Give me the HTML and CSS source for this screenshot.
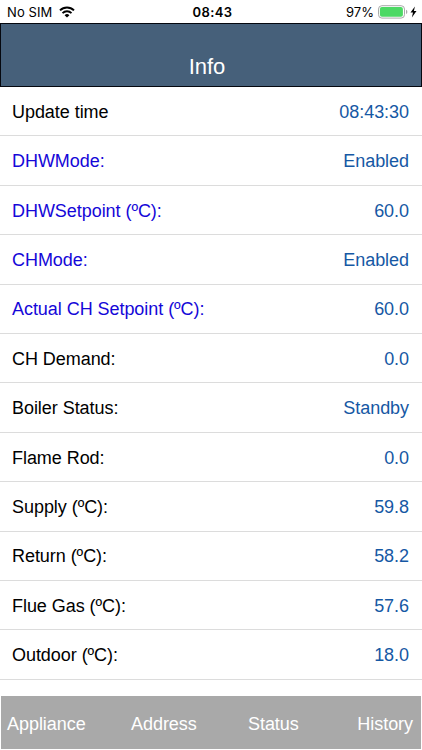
FILE: index.html
```html
<!DOCTYPE html>
<html lang="en">
<head>
    <meta charset="UTF-8">
    <meta name="viewport" content="width=device-width, initial-scale=1.0">
    <title>Info</title>
    <link rel="stylesheet" href="styles.css">
</head>
<body>

    <div class="status-bar">
        <div class="carrier">
            <span>No SIM</span>
            <svg class="wifi" width="16" height="12" viewBox="0 0 16 12">
                <path d="M1 4.4 A10 10 0 0 1 15 4.4" fill="none" stroke="#000" stroke-width="2"/>
                <path d="M3.5 7.1 A6.4 6.4 0 0 1 12.5 7.1" fill="none" stroke="#000" stroke-width="1.9"/>
                <path d="M5.6 9.2 A3.4 3.4 0 0 1 10.4 9.2 L8 11.6 Z" fill="#000"/>
            </svg>
        </div>
        <div class="clock">08:43</div>
        <div class="power">
            <span>97%</span>
            <svg class="battery" width="30" height="14" viewBox="0 0 30 14">
                <rect x="0.5" y="0.7" width="26" height="12.4" rx="3.4" fill="#fff" stroke="#a9a9a9" stroke-width="1"/>
                <rect x="1.9" y="2" width="23" height="9.8" rx="2" fill="#4cd964"/>
                <path d="M28 4.8 Q29.4 5.4 29.4 6.9 Q29.4 8.4 28 9 Z" fill="#a9a9a9"/>
            </svg>
            <svg class="bolt" width="7" height="12" viewBox="0 0 7 12">
                <path d="M4.9 0.5 L0.5 6.6 H3 L1.9 11.5 L6.5 5 H3.9 Z" fill="#000"/>
            </svg>
        </div>
    </div>

    <div class="header">
        <h1>Info</h1>
    </div>

    <div class="list">
        <div class="row"><span>Update time</span><span class="value">08:43:30</span></div>
        <div class="row link"><span>DHWMode:</span><span class="value">Enabled</span></div>
        <div class="row link"><span>DHWSetpoint (ºC):</span><span class="value">60.0</span></div>
        <div class="row link"><span>CHMode:</span><span class="value">Enabled</span></div>
        <div class="row link"><span>Actual CH Setpoint (ºC):</span><span class="value">60.0</span></div>
        <div class="row"><span>CH Demand:</span><span class="value">0.0</span></div>
        <div class="row"><span>Boiler Status:</span><span class="value">Standby</span></div>
        <div class="row"><span>Flame Rod:</span><span class="value">0.0</span></div>
        <div class="row"><span>Supply (ºC):</span><span class="value">59.8</span></div>
        <div class="row"><span>Return (ºC):</span><span class="value">58.2</span></div>
        <div class="row"><span>Flue Gas (ºC):</span><span class="value">57.6</span></div>
        <div class="row"><span>Outdoor (ºC):</span><span class="value">18.0</span></div>
    </div>

    <div class="tabs">
        <span>Appliance</span>
        <span>Address</span>
        <span>Status</span>
        <span>History</span>
    </div>

</body>
</html>
```
FILE: styles.css
```css
* {
    box-sizing: border-box;
}
body {
    font-family: "Liberation Sans", Arial, sans-serif;
    background-color: #fff;
    color: #000;
    display: flex;
    flex-direction: column;
    height: 750px;
    margin: 0;
    overflow: hidden;
}
/* Phone status bar */
.status-bar {
    font-family: Inter, "Liberation Sans", sans-serif;
    display: grid;
    grid-template-columns: 1fr auto 1fr;
    align-items: center;
    height: 23px;
    padding: 1px 5px 0 7px;
    font-size: 13px;
}
.carrier,
.power {
    display: flex;
    align-items: center;
}
.carrier {
    letter-spacing: 0.1px;
}
.wifi {
    margin-left: 7px;
}
.clock {
    padding-left: 1px;
    font-weight: 600;
    letter-spacing: 0.4px;
}
.power {
    justify-content: flex-end;
}
.battery {
    margin-left: 4px;
}
.bolt {
    margin-left: 2px;
}
.header {
    display: flex;
    justify-content: center;
    align-items: flex-end;
    height: 64px;
    padding: 0 8px 6px 0;
    background-color: #46607a;
    border: 1px solid #05080f;
    border-left-width: 1.5px;
}
.header h1 {
    margin: 0;
    color: #fff;
    font-size: 22px;
    font-weight: normal;
    line-height: 26px;
}
.list {
    flex: 1;
}
.row {
    display: flex;
    justify-content: space-between;
    align-items: center;
    height: 49.42px;
    padding: 2px 13px 0 12px;
    border-bottom: 1px solid #dcdcdc;
    font-size: 18px;
    letter-spacing: -0.05px;
}
.link {
    color: #1507d8;
}
.value {
    color: #1658a4;
}
.tabs {
    display: grid;
    grid-template-columns: 124px 117px 1fr auto;
    align-items: center;
    height: 53px;
    margin: 0 1px 1px;
    padding: 3px 8px 0 6px;
    background-color: #a9a9a9;
    color: #fff;
    font-size: 18px;
    letter-spacing: -0.05px;
}
```
